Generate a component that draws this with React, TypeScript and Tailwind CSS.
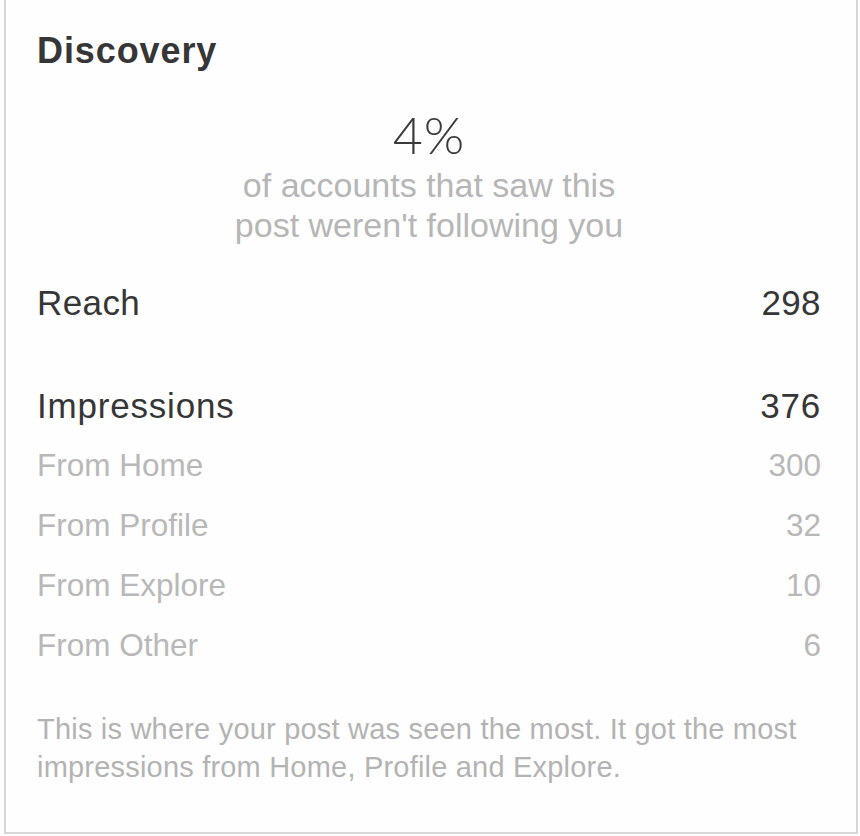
import React from "react";

const rows = [
  { label: "From Home", value: "300" },
  { label: "From Profile", value: "32" },
  { label: "From Explore", value: "10" },
  { label: "From Other", value: "6" },
];

function StatRow({ label, value, className }: { label: string; value: string; className?: string }) {
  return (
    <div className={`flex items-center justify-between ${className ?? ""}`}>
      <span>{label}</span>
      <span>{value}</span>
    </div>
  );
}

export default function App() {
  return (
    <div className="min-h-screen w-full bg-white font-['Liberation_Sans',Arial,sans-serif]">
      <div className="ml-[4px] h-[834px] w-[854px] border-2 border-t-0 border-[#d6d6d6] bg-[#fefefe] pb-[45px] pl-[31px] pr-[35px] pt-[31px]">
        <h2 className="text-[36px] font-bold leading-[40px] tracking-[0.9px] text-[#363636]">Discovery</h2>

        <div className="mt-[32px] flex flex-col items-center">
          <div className="font-['Lato','Liberation_Sans',sans-serif] text-[52px] font-light leading-[62px] tracking-[1px] text-[#3a3a3a]">
            4%
          </div>
          <p className="text-center text-[34px] leading-[40px] text-[#b6b6b6]">
            of accounts that saw this
            <br />
            post weren't following you
          </p>
        </div>

        <StatRow label="Reach" value="298" className="mt-[38px] h-[40px] text-[35px] tracking-[0.4px] text-[#363636]" />
        <StatRow
          label="Impressions"
          value="376"
          className="mt-[63px] h-[40px] text-[35px] tracking-[0.8px] text-[#363636]"
        />

        <div className="mt-[10px]">
          {rows.map((r) => (
            <StatRow key={r.label} label={r.label} value={r.value} className="h-[60px] text-[31.5px] text-[#b8b8b8]" />
          ))}
        </div>

        <p className="mt-[34px] whitespace-nowrap text-[29px] leading-[38px] tracking-[0.2px] text-[#b3b3b3]">
          This is where your post was seen the most. It got the most
          <br />
          impressions from Home, Profile and Explore.
        </p>
      </div>
    </div>
  );
}
